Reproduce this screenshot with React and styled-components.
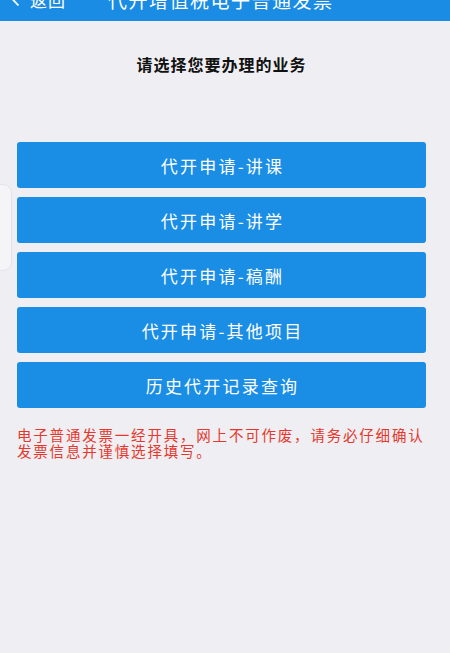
import React from "react";
import styled, { createGlobalStyle } from "styled-components";

const Global = createGlobalStyle`
  html, body { margin: 0; padding: 0; background: #efeef3; }
  body { font-family: "Noto Sans CJK SC", "Noto Sans", sans-serif; }
`;

const Page = styled.div`
  position: relative;
  width: 450px;
  min-height: 653px;
  background: #efeef3;
  overflow: hidden;
`;

const Header = styled.header`
  height: 21px;
  background: #1b8ce3;
  overflow: hidden;
  display: flex;
  align-items: flex-end;
`;

const HeaderRow = styled.div`
  flex-shrink: 0;
  height: 44px;
  width: 100%;
  display: flex;
  align-items: center;
  color: #fff;
  box-sizing: border-box;
  padding-left: 11px;
`;

const Back = styled.span`
  font-size: 17px;
  letter-spacing: 1px;
  width: 97px;
  display: flex;
  align-items: center;
  gap: 10px;
`;

const Title = styled.span`
  font-size: 19px;
  letter-spacing: 1.5px;
`;

const Main = styled.main`
  display: flex;
  flex-direction: column;
  padding: 0 24px 0 17px;
`;

const Heading = styled.h1`
  margin: 31px 0 0;
  text-align: center;
  font-size: 16px;
  line-height: 24px;
  font-weight: 700;
  letter-spacing: 1px;
  color: #111;
`;

const Buttons = styled.div`
  margin-top: 66px;
  display: flex;
  flex-direction: column;
  gap: 9px;
`;

const Button = styled.button`
  height: 46px;
  border: none;
  border-radius: 3px;
  background: #1a8de5;
  color: #fff;
  font-family: inherit;
  font-size: 17px;
  letter-spacing: 2.2px;
  padding: 0 0 0 2px;
`;

const Notice = styled.p`
  margin: 19px 0 0;
  color: #e5382c;
  font-size: 14.5px;
  line-height: 15.5px;
  letter-spacing: 1.8px;
  margin-right: -10px;
`;

const Floating = styled.div`
  position: absolute;
  left: -30px;
  top: 184px;
  width: 42px;
  height: 87px;
  border-radius: 9px;
  background: #f5f5f7;
  border: 1px solid #e4e4e8;
  box-sizing: border-box;
`;

const items = [
  "代开申请-讲课",
  "代开申请-讲学",
  "代开申请-稿酬",
  "代开申请-其他项目",
  "历史代开记录查询",
];

export default function App() {
  return (
    <Page>
      <Global />
      <Header>
        <HeaderRow>
          <Back>
            <svg width="9" height="15" viewBox="0 0 9 15">
              <path d="M7.5 1.5 L1.8 7.5 L7.5 13.5" fill="none" stroke="#fff" strokeWidth="1.8" />
            </svg>
            返回
          </Back>
          <Title>代开增值税电子普通发票</Title>
        </HeaderRow>
      </Header>
      <Main>
        <Heading>请选择您要办理的业务</Heading>
        <Buttons>
          {items.map((t) => (
            <Button key={t}>{t}</Button>
          ))}
        </Buttons>
        <Notice>
          电子普通发票一经开具，网上不可作废，请务必仔细确认发票信息并谨慎选择填写。
        </Notice>
      </Main>
      <Floating />
    </Page>
  );
}
